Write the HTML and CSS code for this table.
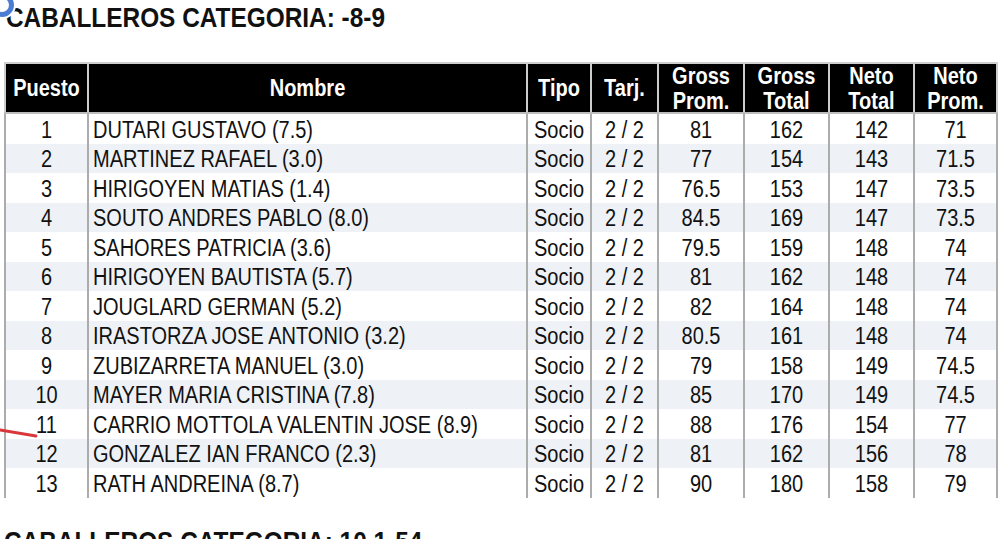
FILE: index.html
```html
<!DOCTYPE html>
<html lang="es">
<head>
<meta charset="utf-8">
<title>Caballeros Categoria</title>
<link rel="stylesheet" href="styles.css">
</head>
<body>
<div class="page">
  <h1 class="title"><span>CABALLEROS CATEGORIA: -8-9</span></h1>

  <div class="table">
    <div class="row head">
      <div class="cell"><span>Puesto</span></div>
      <div class="cell"><span>Nombre</span></div>
      <div class="cell"><span>Tipo</span></div>
      <div class="cell"><span>Tarj.</span></div>
      <div class="cell"><span>Gross<br>Prom.</span></div>
      <div class="cell"><span>Gross<br>Total</span></div>
      <div class="cell"><span>Neto<br>Total</span></div>
      <div class="cell"><span>Neto<br>Prom.</span></div>
    </div>
    <div class="row"><div class="cell"><span>1</span></div><div class="cell name"><span>DUTARI GUSTAVO (7.5)</span></div><div class="cell"><span>Socio</span></div><div class="cell"><span>2 / 2</span></div><div class="cell"><span>81</span></div><div class="cell"><span>162</span></div><div class="cell"><span>142</span></div><div class="cell"><span>71</span></div></div>
    <div class="row alt"><div class="cell"><span>2</span></div><div class="cell name"><span>MARTINEZ RAFAEL (3.0)</span></div><div class="cell"><span>Socio</span></div><div class="cell"><span>2 / 2</span></div><div class="cell"><span>77</span></div><div class="cell"><span>154</span></div><div class="cell"><span>143</span></div><div class="cell"><span>71.5</span></div></div>
    <div class="row"><div class="cell"><span>3</span></div><div class="cell name"><span>HIRIGOYEN MATIAS (1.4)</span></div><div class="cell"><span>Socio</span></div><div class="cell"><span>2 / 2</span></div><div class="cell"><span>76.5</span></div><div class="cell"><span>153</span></div><div class="cell"><span>147</span></div><div class="cell"><span>73.5</span></div></div>
    <div class="row alt"><div class="cell"><span>4</span></div><div class="cell name"><span>SOUTO ANDRES PABLO (8.0)</span></div><div class="cell"><span>Socio</span></div><div class="cell"><span>2 / 2</span></div><div class="cell"><span>84.5</span></div><div class="cell"><span>169</span></div><div class="cell"><span>147</span></div><div class="cell"><span>73.5</span></div></div>
    <div class="row"><div class="cell"><span>5</span></div><div class="cell name"><span>SAHORES PATRICIA (3.6)</span></div><div class="cell"><span>Socio</span></div><div class="cell"><span>2 / 2</span></div><div class="cell"><span>79.5</span></div><div class="cell"><span>159</span></div><div class="cell"><span>148</span></div><div class="cell"><span>74</span></div></div>
    <div class="row alt"><div class="cell"><span>6</span></div><div class="cell name"><span>HIRIGOYEN BAUTISTA (5.7)</span></div><div class="cell"><span>Socio</span></div><div class="cell"><span>2 / 2</span></div><div class="cell"><span>81</span></div><div class="cell"><span>162</span></div><div class="cell"><span>148</span></div><div class="cell"><span>74</span></div></div>
    <div class="row"><div class="cell"><span>7</span></div><div class="cell name"><span>JOUGLARD GERMAN (5.2)</span></div><div class="cell"><span>Socio</span></div><div class="cell"><span>2 / 2</span></div><div class="cell"><span>82</span></div><div class="cell"><span>164</span></div><div class="cell"><span>148</span></div><div class="cell"><span>74</span></div></div>
    <div class="row alt"><div class="cell"><span>8</span></div><div class="cell name"><span>IRASTORZA JOSE ANTONIO (3.2)</span></div><div class="cell"><span>Socio</span></div><div class="cell"><span>2 / 2</span></div><div class="cell"><span>80.5</span></div><div class="cell"><span>161</span></div><div class="cell"><span>148</span></div><div class="cell"><span>74</span></div></div>
    <div class="row"><div class="cell"><span>9</span></div><div class="cell name"><span>ZUBIZARRETA MANUEL (3.0)</span></div><div class="cell"><span>Socio</span></div><div class="cell"><span>2 / 2</span></div><div class="cell"><span>79</span></div><div class="cell"><span>158</span></div><div class="cell"><span>149</span></div><div class="cell"><span>74.5</span></div></div>
    <div class="row alt"><div class="cell"><span>10</span></div><div class="cell name"><span>MAYER MARIA CRISTINA (7.8)</span></div><div class="cell"><span>Socio</span></div><div class="cell"><span>2 / 2</span></div><div class="cell"><span>85</span></div><div class="cell"><span>170</span></div><div class="cell"><span>149</span></div><div class="cell"><span>74.5</span></div></div>
    <div class="row"><div class="cell"><span>11</span></div><div class="cell name"><span>CARRIO MOTTOLA VALENTIN JOSE (8.9)</span></div><div class="cell"><span>Socio</span></div><div class="cell"><span>2 / 2</span></div><div class="cell"><span>88</span></div><div class="cell"><span>176</span></div><div class="cell"><span>154</span></div><div class="cell"><span>77</span></div></div>
    <div class="row alt"><div class="cell"><span>12</span></div><div class="cell name"><span>GONZALEZ IAN FRANCO (2.3)</span></div><div class="cell"><span>Socio</span></div><div class="cell"><span>2 / 2</span></div><div class="cell"><span>81</span></div><div class="cell"><span>162</span></div><div class="cell"><span>156</span></div><div class="cell"><span>78</span></div></div>
    <div class="row"><div class="cell"><span>13</span></div><div class="cell name"><span>RATH ANDREINA (8.7)</span></div><div class="cell"><span>Socio</span></div><div class="cell"><span>2 / 2</span></div><div class="cell"><span>90</span></div><div class="cell"><span>180</span></div><div class="cell"><span>158</span></div><div class="cell"><span>79</span></div></div>
  </div>

  <h1 class="title title-next"><span>CABALLEROS CATEGORIA: 10.1-54</span></h1>

  <div class="ring" aria-hidden="true"></div>
  <svg class="mark" viewBox="0 0 40 14" aria-hidden="true">
    <path d="M0 3 L36 9" stroke="#d8383b" stroke-width="2.8" stroke-linecap="round" fill="none"/>
  </svg>
</div>
</body>
</html>
```

FILE: styles.css
```css
html, body {
  margin: 0;
  padding: 0;
  background: #ffffff;
}

body {
  font-family: "Liberation Sans", Arial, sans-serif;
  color: #111111;
  overflow: hidden;
}

.page {
  position: relative;
  width: 1000px;
  height: 539px;
  overflow: hidden;
}

.title {
  margin: 0;
  padding: 5px 0 0 6px;
  font-size: 24.4px;
  line-height: 28px;
  font-weight: bold;
  color: #111111;
  white-space: nowrap;
}

.title span {
  display: inline-block;
  transform: scaleY(1.15);
  transform-origin: 0 78%;
}

.title-next {
  margin-top: 31px;
  padding: 0 0 0 4px;
}

.table {
  margin: 29px 0 0 4px;
  width: 994px;
}

.row {
  display: grid;
  grid-template-columns: 83px 439px 64px 67px 86px 85px 85px 85px;
  height: 29.5px;
  background: #ffffff;
}

.row.alt {
  background: #eef1f6;
}

.cell {
  box-sizing: border-box;
  border-left: 2px solid #acacac;
  display: flex;
  align-items: center;
  justify-content: center;
  font-size: 20px;
  line-height: 22px;
  padding-top: 2px;
  text-align: center;
  white-space: nowrap;
}

.cell span {
  display: inline-block;
  transform: scaleY(1.15);
}

.cell:last-child {
  border-right: 2px solid #acacac;
}

.cell.name {
  justify-content: flex-start;
  padding-left: 4px;
}

.row.head {
  height: 52px;
  background: #000000;
  border-top: 2px solid #cfcfcf;
  border-bottom: 2px solid #bdbdbd;
  box-sizing: border-box;
}

.row.head .cell {
  color: #ffffff;
  font-weight: bold;
  line-height: 21px;
  padding-top: 1px;
  border-left-color: #cccccc;
}

.row.head .cell:last-child {
  border-right-color: #cccccc;
}

.ring {
  position: absolute;
  left: -10px;
  top: -7px;
  width: 14px;
  height: 14px;
  border: 5px solid #4a7dd3;
  border-radius: 50%;
  background: #ffffff;
  box-shadow: 0 0 0 2px #ffffff;
  z-index: 5;
}

.mark {
  position: absolute;
  left: 0;
  top: 427px;
  width: 40px;
  height: 14px;
  z-index: 5;
}
```
